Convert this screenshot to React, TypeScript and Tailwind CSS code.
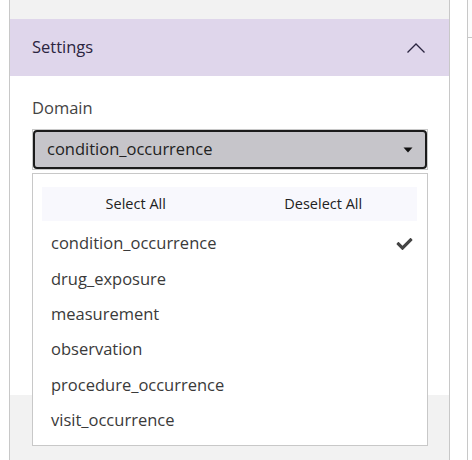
import { FaCheck } from 'react-icons/fa'

const domains = [
  'condition_occurrence',
  'drug_exposure',
  'measurement',
  'observation',
  'procedure_occurrence',
  'visit_occurrence',
]

export default function App() {
  const selected = 'condition_occurrence'

  return (
    <div
      className="relative flex h-[460px] w-[472px] overflow-hidden bg-white text-[#333]"
      style={{ fontFamily: '"Open Sans", "Noto Sans", sans-serif' }}
    >
      <div className="ml-[9px] flex h-full w-[441px] flex-col border-x border-[#c8c8c8]">
        <div className="h-[19px] bg-[#f2f2f2]" />
        <div className="flex h-[57px] items-center justify-between bg-[#dfd6eb] pl-[22px] pr-[23px]">
          <span className="text-[16.5px] text-[#2b2540]">Settings</span>
          <svg width="20" height="12" viewBox="0 0 20 12" fill="none">
            <path d="M1.5 10.5 L10 2 L18.5 10.5" stroke="#2b2540" strokeWidth="1.3" />
          </svg>
        </div>

        <div className="relative h-[319px] bg-white pl-[22px] pr-[21px] pt-[20px]">
          <div className="text-[16.5px] leading-6 text-[#444]">Domain</div>
          <div className="mt-[9px] h-[41px] w-[396px] border border-[#c8c8c8]">
            <div className="flex h-full items-center justify-between rounded-[4px] border-2 border-[#1b1b1b] bg-[#c6c5ca] pl-[12px] pr-[12px]">
              <span className="text-[16.5px] text-[#222]">condition_occurrence</span>
              <svg width="10" height="6" viewBox="0 0 10 6">
                <path d="M0.5 0.5 L9.5 0.5 L5 5.5 Z" fill="#111" />
              </svg>
            </div>
          </div>

          <div className="absolute left-[22px] top-[97px] z-10 h-[273px] w-[396px] border border-[#c8c8c8] bg-white pt-[13px]">
            <div className="ml-[9px] flex h-[34px] w-[375px] bg-[#f8f8fd] text-[14.5px] text-[#222]">
              <button className="flex flex-1 items-center justify-center">Select All</button>
              <button className="flex flex-1 items-center justify-center">Deselect All</button>
            </div>
            <ul className="mt-[5px]">
              {domains.map((d) => (
                <li
                  key={d}
                  className="flex h-[35.4px] items-center justify-between pl-[18px] pr-[14px] text-[16.5px] text-[#3a3a3a]"
                >
                  <span>{d}</span>
                  {d === selected && <FaCheck className="h-[16px] w-[17px] text-[#444]" />}
                </li>
              ))}
            </ul>
          </div>
        </div>

        <div className="flex-1 bg-[#f2f2f2]" />
      </div>

      <div className="ml-[17px] flex-1 border-l border-[#c8c8c8]">
        <div className="h-[38px] border-b border-[#c8c8c8] bg-[#fcfcfc]" />
      </div>
    </div>
  )
}
